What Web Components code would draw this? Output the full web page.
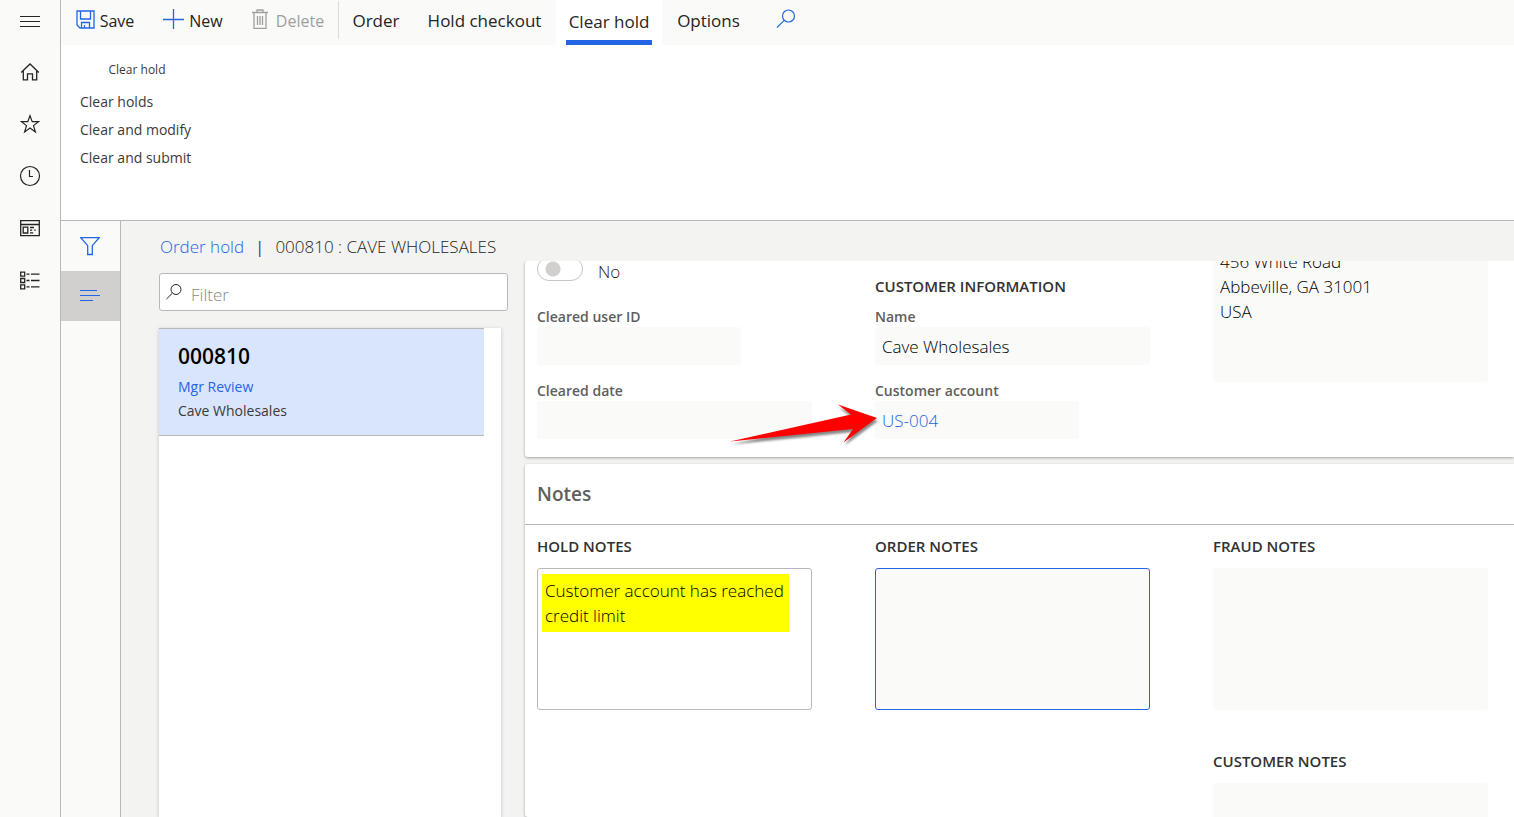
<!DOCTYPE html>
<html lang="en">
<head>
<meta charset="utf-8">
<meta name="viewport" content="width=device-width, initial-scale=1">
<title>Order hold</title>
<style>
  html, body { margin: 0; height: 100%; }
  body {
    font-family: "Open Sans", "Noto Sans", sans-serif; font-weight: 300;
    font-size: 17px; line-height: 24px; color: #252423; background: #fff; overflow: hidden;
    --blue: #2266e3; --line: #bab8b7; --pale: #fafaf9; --canvas: #f3f3f2;
  }
</style>
</head>
<body>
<app-shell>
  <nav-rail slot="nav"></nav-rail>
  <action-bar slot="actions"></action-bar>
  <ribbon-group slot="ribbon" heading="Clear hold">
    <button>Clear holds</button>
    <button>Clear and modify</button>
    <button>Clear and submit</button>
  </ribbon-group>
  <pane-rail slot="panes"></pane-rail>
  <page-title slot="title" href="#orders" section="Order hold">000810 : CAVE WHOLESALES</page-title>
  <order-list slot="list">
    <order-item number="000810" status="Mgr Review">Cave Wholesales</order-item>
  </order-list>
  <fast-tab slot="detail" scrolled>
    <form-column>
      <toggle-field label="Cleared" state="No"></toggle-field>
      <form-field label="Cleared user ID" size="short"></form-field>
      <form-field label="Cleared date"></form-field>
    </form-column>
    <form-column heading="Customer information">
      <form-field label="Name" value="Cave Wholesales"></form-field>
      <form-field label="Customer account" value="US-004" href="#US-004" size="short"><red-arrow></red-arrow></form-field>
    </form-column>
    <form-column class="raised">
      <note-box name="Address" plain>456 White Road
Abbeville, GA 31001
USA</note-box>
    </form-column>
  </fast-tab>
  <fast-tab slot="detail" heading="Notes" grow>
    <form-column heading="Hold notes"><note-box name="Hold notes" editable marked>Customer account has reached credit limit</note-box></form-column>
    <form-column heading="Order notes"><note-box name="Order notes" active></note-box></form-column>
    <form-column heading="Fraud notes"><note-box name="Fraud notes"></note-box>
      <note-section heading="Customer notes"><note-box name="Customer notes"></note-box></note-section>
    </form-column>
  </fast-tab>
</app-shell>

<script>
const RESET = `
  :host, *, *::before { box-sizing: border-box; }
  button, input, textarea { font: inherit; color: inherit; background: none; border: 0; margin: 0; padding: 0; border-radius: 0; }
  a { text-decoration: none; color: var(--blue); }
  svg { display: block; fill: none; stroke: currentColor; flex: none; }
  h2, h3, p, ul { margin: 0; padding: 0; list-style: none; }
`;

const define = (name, css, render) => customElements.define(name, class extends HTMLElement {
  connectedCallback() {
    if (this.shadowRoot) return;
    const root = this.attachShadow({ mode: "open" });
    root.innerHTML = `<style>${RESET}${css}</style>${render(this)}`;
  }
});
const at = (el, key) => el.getAttribute(key) || "";

define("app-shell", `
  :host { display: grid; grid-template-columns: 61px minmax(0, 1fr); height: 100vh; }
  .work { display: flex; flex-direction: column; min-height: 0; }
  .ribbon { height: 176px; flex: none; border-bottom: 1px solid var(--line); }
  .body { display: grid; grid-template-columns: 60px minmax(0, 1fr); flex: 1; min-height: 0; }
  main { display: flex; flex-direction: column; min-height: 0; background: var(--canvas); }
  .columns { display: grid; grid-template-columns: 349px minmax(0, 1fr); column-gap: 17px; padding-left: 38px; flex: 1; min-height: 0; }
  .detail { display: flex; flex-direction: column; gap: 7px; min-height: 0; overflow: hidden; padding-left: 8px; margin-left: -8px; }
`, () => `
  <slot name="nav"></slot>
  <div class="work">
    <slot name="actions"></slot>
    <div class="ribbon"><slot name="ribbon"></slot></div>
    <div class="body">
      <slot name="panes"></slot>
      <main>
        <slot name="title"></slot>
        <div class="columns"><slot name="list"></slot><div class="detail"><slot name="detail"></slot></div></div>
      </main>
    </div>
  </div>`);

define("nav-rail", `
  :host { display: block; background: var(--pale); border-right: 1px solid var(--line); }
  nav { display: flex; flex-direction: column; }
  button { display: grid; place-items: center; height: 52px; }
  .menu { height: 42px; margin-bottom: 4px; }
`, () => `<nav aria-label="Main">
  <button class="menu" aria-label="Expand the navigation pane"><svg width="20" height="14"><path d="M0 2.5h20M0 7.5h20M0 12.5h20"/></svg></button>
  <button aria-label="Home"><svg width="20" height="20" stroke-width="1.3"><path d="M1.200 10.500 10 2l8.800 8.500M3.300 8.800v9h4.200v-6h5v6h4.200v-9"/></svg></button>
  <button aria-label="Favorites"><svg width="20" height="20" stroke-width="1.200"><path d="m10 1.600 2.200 6h6.300l-5 4 1.900 6.300-5.400-3.800-5.400 3.800 1.900-6.300-5-4h6.300z"/></svg></button>
  <button aria-label="Recent"><svg width="22" height="22" stroke-width="1.200"><circle cx="11" cy="11" r="9.500"/><path d="M10.500 5v6.500H14"/></svg></button>
  <button aria-label="Workspaces"><svg width="20" height="18" stroke-width="1.300"><path d="M.7 1.700h18.600v15H.7zM.7 5.500h18.600M3.200 8.200h4.600v5.800H3.200zM10 8.500h4M10 11.200h2.200M10 13.900h3.200M14.200 11.200h1.500"/></svg></button>
  <button aria-label="Modules"><svg width="20" height="20" stroke-width="1.300"><path d="M.7 2.200h4v4h-4zM.7 8.500h4v4h-4zM.7 14.800h4v4h-4zM6.500 4.200h3M11 4.200h8.500M6.500 10.500h3M11 10.500h8.500M6.500 16.800h3M11 16.800h8.500"/></svg></button>
</nav>`);

define("action-bar", `
  :host { display: block; background: var(--pale); flex: none; }
  div { display: flex; height: 45px; }
  button { display: flex; align-items: center; justify-content: center; gap: 5px; width: 88px; padding-bottom: 3px; white-space: nowrap; font-weight: 400; }
  button:not(.tab) { font-size: 16px; }
  svg { color: var(--blue); margin-bottom: 4px; }
  .off, .off svg { color: #a19f9d; }
  .off { width: 102px; gap: 8px; position: relative; }
  .off::before { content: ""; position: absolute; right: 0; top: 1px; height: 38px; border-right: 1px solid #dddbd9; }
  .tab { font-weight: 500; width: 74px; }
  .tab.wide { width: 143px; }
  .tab.on { width: 106px; background: #fff; padding: 0 10px; }
  .on span { width: 100%; height: 100%; padding-top: 10px; border-bottom: 5px solid var(--blue); }
  .tab.mid { width: 93px; }
  .find { width: 62px; }
`, () => `<div role="toolbar" aria-label="Actions">
  <button><svg width="19" height="19" stroke-width="1.300"><path d="M1 1h17v17H4l-3-3zM4.500 1v8h10V1M5.500 18v-5.500h8V18M8.500 18v-3"/></svg>Save</button>
  <button><svg width="21" height="20"><path d="M0 10.500h21M10.500 0v20" stroke-width="1.300"/></svg>New</button>
  <button class="off" disabled><svg width="16" height="20" stroke-width="1.300"><path d="M0 3.500h16M5 3.500V1h6v2.500M2 3.500v15.800h12V3.500M5.500 7v9M8 7v9M10.500 7v9"/></svg>Delete</button>
  <button class="tab">Order</button>
  <button class="tab wide">Hold checkout</button>
  <button class="tab on"><span>Clear hold</span></button>
  <button class="tab mid">Options</button>
  <button class="find" aria-label="Search"><svg width="20" height="20" stroke-width="1.200"><circle cx="12.500" cy="7" r="6"/><path d="M8.200 11.300 1 18.500"/></svg></button>
</div>`);

define("ribbon-group", `
  :host { display: block; width: 152px; padding-top: 15px; font-weight: 400; color: #3b3a39; }
  h2 { font-size: 12px; line-height: 20px; font-weight: 400; text-align: center; }
  div { display: flex; flex-direction: column; align-items: flex-start; gap: 8px; padding: 12px 0 0 19px; }
  ::slotted(button) { font: inherit; font-size: 14px; line-height: 20px; color: inherit; background: none; border: 0; margin: 0; padding: 0; white-space: nowrap; }
`, el => `<h2>${at(el, "heading")}</h2><div><slot></slot></div>`);

define("pane-rail", `
  :host { display: flex; flex-direction: column; background: var(--pale); border-right: 1px solid var(--line); color: var(--blue); }
  button { display: grid; place-items: center; height: 50px; padding-right: 1px; }
  .on { background: #d2d0ce; }
`, () => `
  <button aria-label="Filters"><svg width="20" height="20" stroke-width="1.300"><path d="M.8 1.700h18.400L12.300 9.700V18.500H7.700V9.700z"/></svg></button>
  <button class="on" aria-label="List"><svg width="20" height="14"><path d="M0 1.500h17M0 6.500h20M0 11.500h13" stroke-width="1.200"/></svg></button>`);

define("page-title", `
  :host { display: block; height: 40px; padding: 14px 0 0 39px; flex: none; }
  p { display: flex; gap: 11px; white-space: nowrap; }
  i { font-style: normal; font-weight: 500; color: #323c90; }
`, el => `<p><a href="${at(el, "href")}">${at(el, "section")}</a><i>|</i><span><slot></slot></span></p>`);

define("order-list", `
  :host { display: flex; flex-direction: column; gap: 17px; padding-top: 12px; min-height: 0; }
  label { display: flex; align-items: center; gap: 9px; height: 38px; padding: 0 6px; border: 1px solid var(--line); border-radius: 3px; background: #fff; }
  svg { margin-bottom: 1px; }
  input { flex: 1; min-width: 0; padding-top: 5px; outline: 0; }
  input::placeholder { color: #8a8886; opacity: 1; }
  .cards { flex: 1; width: 342px; background: #fff; box-shadow: 0 1px 4px #0003; padding-right: 17px; }
`, () => `
  <label><svg width="16" height="16"><circle cx="10" cy="5.500" r="5"/><path d="M6.400 9.200.5 15"/></svg><input type="text" placeholder="Filter" aria-label="Filter"></label>
  <div class="cards"><slot></slot></div>`);

define("order-item", `
  :host { display: block; height: 108px; padding: 14px 19px 0; background: #d9e5fc; border: solid var(--line); border-width: 1px 0; font-size: 14px; font-weight: 400; }
  h3 { font-size: 21px; line-height: 26px; font-weight: 600; color: #000; padding-bottom: 6px; }
  p { color: #3b3a39; }
`, el => `<h3>${at(el, "number")}</h3><a href="#review">${at(el, "status")}</a><p><slot></slot></p>`);

define("fast-tab", `
  :host { display: flex; flex-direction: column; flex: none; background: #fff; border-radius: 3px 0 0 3px; box-shadow: 0 1px 3px #0005; }
  :host([scrolled]) { height: 196px; justify-content: flex-end; clip-path: inset(0 0 -8px -8px); }
  :host([grow]) { flex: 1; min-height: 0; overflow: hidden; }
  h2 { height: 61px; padding: 18px 12px 0; border-bottom: 1px solid var(--line); font-size: 19px; font-weight: 600; color: #605e5c; flex: none; }
  .grid { display: grid; grid-template-columns: repeat(3, 275px); column-gap: 63px; padding: 11px 12px; }
  :host([scrolled]) .grid { padding-bottom: 18px; align-items: end; }
  ::slotted(.raised) { padding-bottom: 57px; }
`, el => `${at(el, "heading") ? `<h2>${at(el, "heading")}</h2>` : ""}<div class="grid"><slot></slot></div>`);

const HEADING = `h3 { font-size: 15px; line-height: 20px; font-weight: 600; text-transform: uppercase; color: #323130; white-space: nowrap; }`;
define("form-column", `:host { display: block; } ${HEADING}`,
  el => `${at(el, "heading") ? `<h3>${at(el, "heading")}</h3>` : ""}<slot></slot>`);
define("note-section", `:host { display: block; padding-top: 41px; } ${HEADING}`,
  el => `<h3>${at(el, "heading")}</h3><slot></slot>`);

define("toggle-field", `
  :host { display: block; padding-bottom: 12px; }
  label { display: flex; gap: 15px; height: 24px; }
  input { appearance: none; width: 46px; height: 24px; margin-top: -3px; border: 1px solid #c8c6c4; border-radius: 12px; background: radial-gradient(circle at 15px 11px, #d2d0ce 7px, #0000 8px); }
`, el => `<label><input type="checkbox" role="switch" disabled aria-label="${at(el, "label")}">${at(el, "state")}</label>`);

define("form-field", `
  :host { display: block; padding-top: 11px; position: relative; }
  :host(:not(:first-of-type)) { padding-top: 16px; }
  :host([size=short]) .box { width: 204px; }
  label { display: block; font-size: 14px; line-height: 20px; font-weight: 600; color: #605e5c; }
  .box { display: block; width: 100%; height: 38px; padding: 1px 7px 0; border-radius: 3px; background: var(--pale); color: #000; outline: 0; }
  a.box { color: var(--blue); padding-top: 8px; }
`, el => `<label for="f" id="l">${at(el, "label")}</label>${at(el, "href")
  ? `<a class="box" id="f" aria-labelledby="l f" href="${at(el, "href")}">${at(el, "value")}</a>`
  : `<input class="box" id="f" type="text" readonly value="${at(el, "value")}">`}<slot></slot>`);

define("note-box", `
  :host { display: block; position: relative; margin-top: 12px; }
  textarea { display: block; position: relative; width: 100%; height: 142px; padding: 9px 7px; border: 1px solid #0000; border-radius: 3px; resize: none; outline: 0; overflow: hidden; line-height: 25px; color: #000; background: var(--pale); }
  :host([plain]) textarea { padding: 8px 6px; }
  :host([editable]) textarea { border-color: var(--line); background: none; }
  :host([active]) textarea { border-color: var(--blue); }
  mark { position: absolute; left: 5px; top: 6px; width: 247px; height: 58px; background: #ff0; }
`, el => `${el.hasAttribute("marked") ? "<mark></mark>" : ""}<textarea readonly aria-label="${at(el, "name")}">${el.textContent}</textarea>`);

define("red-arrow", `
  :host { position: absolute; right: 100%; top: 37px; margin-right: -4px; }
  svg { filter: drop-shadow(1px 3px 1px #0007); overflow: visible; }
`, () => `<svg width="150" height="42" aria-hidden="true"><path d="M1 39.500 122 12.500 109 2.500 148 16 114.500 40.500 124 27z" fill="#f00" stroke="none"/></svg>`);
</script>
</body>
</html>
